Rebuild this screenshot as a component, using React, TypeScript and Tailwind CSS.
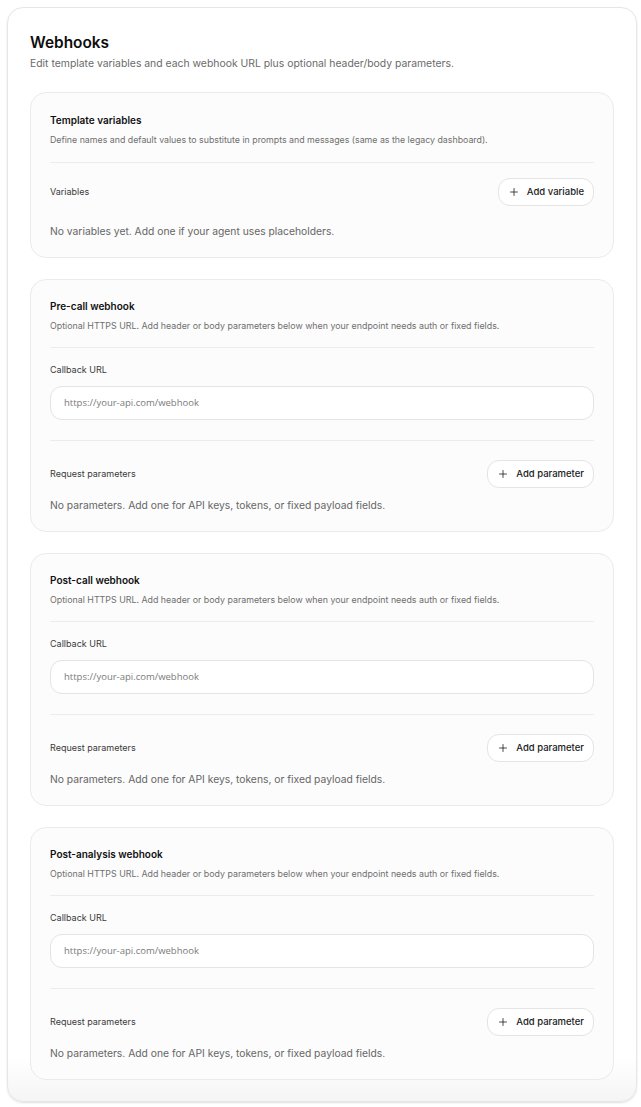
import React from "react";
import { Plus } from "lucide-react";

const sans = "font-['Inter','Liberation_Sans',sans-serif]";

function AddButton({ label }: { label: string }) {
  return (
    <button
      type="button"
      className="flex h-[28px] items-center gap-[7px] rounded-[12px] border border-[#e4e4e4] bg-white pl-[9px] pr-[9px] text-[9.5px] font-medium text-[#1a1a1a]"
    >
      <Plus size={12} strokeWidth={1.5} className="text-[#111]" />
      <span>{label}</span>
    </button>
  );
}

function Divider() {
  return <div className="h-px w-full bg-[#ececec]" />;
}

function WebhookCard({ title }: { title: string }) {
  return (
    <section className="rounded-[16px] border border-[#ebebeb] bg-[#fcfcfc] px-[19px] pt-[19px] pb-[19px]">
      <h2 className="text-[10px] font-semibold leading-[14px] text-[#111]">{title}</h2>
      <p className="mt-[7px] text-[8.85px] leading-[12px] text-[#6f6f6f]">
        Optional HTTPS URL. Add header or body parameters below when your endpoint needs auth or fixed fields.
      </p>
      <div className="mt-[15px]">
        <Divider />
      </div>
      <div className="mt-[15px] text-[9px] leading-[14px] text-[#3a3a3a]">Callback URL</div>
      <div className="mt-[9px] flex h-[34px] items-center rounded-[12px] border border-[#e4e4e4] bg-white px-[13px]">
        <span className="font-['Open_Sans','DejaVu_Sans',sans-serif] text-[9.5px] text-[#7a7a7a]">
          https://your-api.com/webhook
        </span>
      </div>
      <div className="mt-[20px]">
        <Divider />
      </div>
      <div className="mt-[19px] flex items-center justify-between">
        <span className="text-[9px] leading-[14px] text-[#3a3a3a]">Request parameters</span>
        <AddButton label="Add parameter" />
      </div>
      <p className="mt-[10px] text-[10.3px] leading-[14px] text-[#666]">
        No parameters. Add one for API keys, tokens, or fixed payload fields.
      </p>
    </section>
  );
}

export default function App() {
  return (
    <div className={`min-h-[1107px] bg-white pt-[7px] pl-[7px] ${sans}`}>
      <div className="w-[630px] rounded-[16px] border border-[#e6e6e6] bg-[linear-gradient(to_bottom,#ffffff_96%,#f5f5f5)] px-[22px] pt-[23px] pb-[21px] shadow-[0_1px_2px_rgba(0,0,0,0.12)]">
        <h1 className="text-[15.4px] font-semibold leading-[24px] text-[#0d0d0d]">Webhooks</h1>
        <p className="mt-[1px] text-[10.4px] leading-[16px] text-[#6a6a6a]">
          Edit template variables and each webhook URL plus optional header/body parameters.
        </p>

        <div className="mt-[20px] flex flex-col gap-[21px]">
          <section className="rounded-[16px] border border-[#ebebeb] bg-[#fcfcfc] px-[19px] pt-[20px] pb-[19px]">
            <h2 className="text-[10px] font-semibold leading-[14px] text-[#111]">Template variables</h2>
            <p className="mt-[7px] text-[8.8px] leading-[12px] text-[#6f6f6f]">
              Define names and default values to substitute in prompts and messages (same as the legacy dashboard).
            </p>
            <div className="mt-[16px]">
              <Divider />
            </div>
            <div className="mt-[15px] flex items-center justify-between">
              <span className="text-[9px] leading-[14px] text-[#3a3a3a]">Variables</span>
              <AddButton label="Add variable" />
            </div>
            <p className="mt-[18px] text-[10.3px] leading-[14px] text-[#666]">
              No variables yet. Add one if your agent uses placeholders.
            </p>
          </section>

          <WebhookCard title="Pre-call webhook" />
          <WebhookCard title="Post-call webhook" />
          <WebhookCard title="Post-analysis webhook" />
        </div>
      </div>
    </div>
  );
}
